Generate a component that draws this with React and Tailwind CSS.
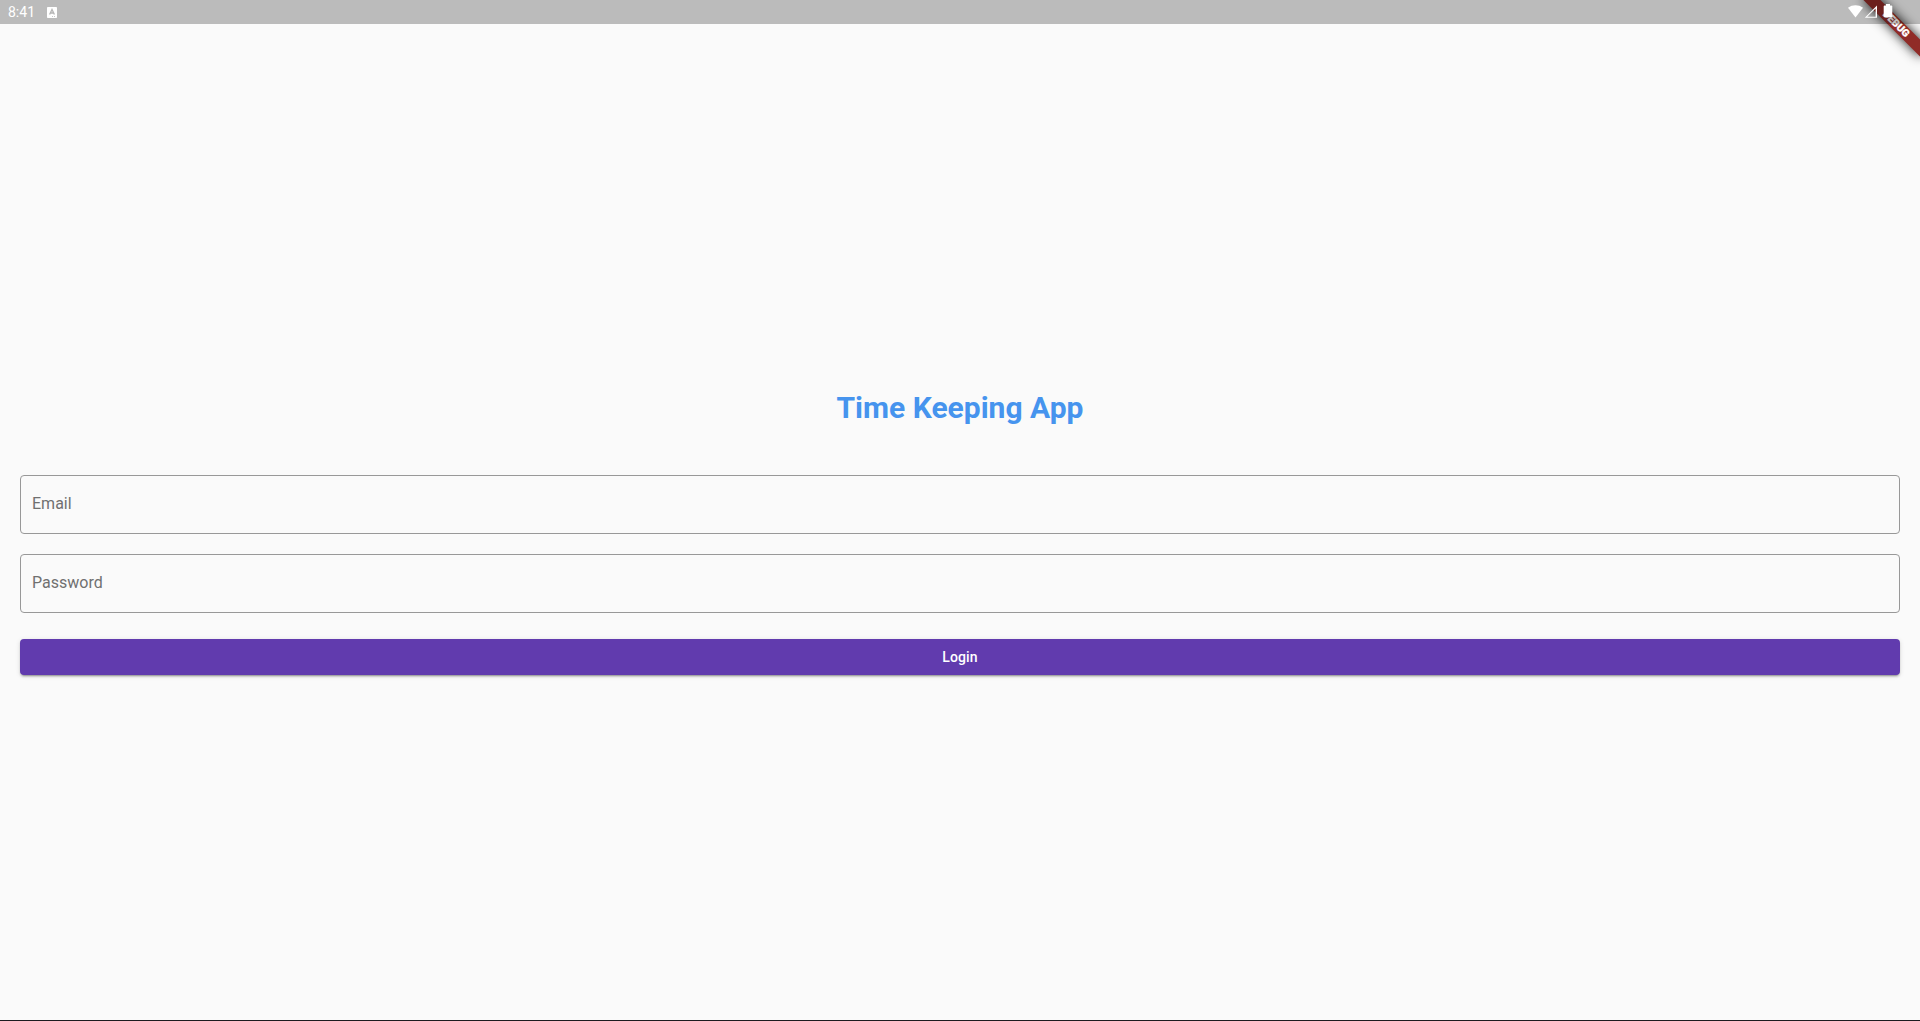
function DebugBanner() {
  return (
    <div className="pointer-events-none absolute top-0 right-0 h-20 w-20 overflow-hidden">
      <div className="absolute top-[28px] left-[40px] h-3 w-20 origin-[40px_-28px] rotate-45 bg-[#902b27] text-center text-[10.2px] leading-[12px] font-black text-white shadow-[0_0_12px_rgba(0,0,0,0.9)] [-webkit-text-stroke:0.3px_white]">
        DEBUG
      </div>
    </div>
  );
}

function StatusBar() {
  return (
    <header className="relative z-10 flex h-6 shrink-0 items-center bg-black/25 pr-[26px] pl-2 text-white">
      <span className="text-[14px] leading-6">8:41</span>
      <svg className="ml-3 h-[11px] w-[10px]" viewBox="0 0 10 11">
        <rect width="10" height="11" rx="0.8" fill="#fff" />
        <path d="M2.6 7.5 5 2.5l2.4 5M3.5 6h3" fill="none" stroke="#b5b5b5" strokeWidth="1.3" />
        <path d="M5 9.5h1M7 9.5h1" stroke="#bbb" strokeWidth="0.8" />
      </svg>
      <div className="ml-auto flex h-6">
        <svg className="h-6 w-[46px]" viewBox="0 0 46 24">
          <path d="M0 7.7C4.5 4.4 10.5 4.4 15 7.7L7.5 17.6Z" fill="#fff" />
          <path d="M16.8 17.8 29 5.5V17.8ZM19.2 16.8H27.6V8.4Z" fill="#fff" fillRule="evenodd" />
          <path d="M38 4h4v1.5h1.5q.8 0 .8.8v9.9q0 .8-.8.8h-7q-.8 0-.8-.8V6.3q0-.8.8-.8H38Z" fill="#fff" />
        </svg>
      </div>
    </header>
  );
}

function Field({ label, type }) {
  return (
    <input
      type={type}
      placeholder={label}
      aria-label={label}
      className="block h-[59px] w-full rounded-[4px] border border-[#989898] bg-transparent px-[11px] pb-[2px] text-[16px] text-[#666] outline-none placeholder:text-[#707070]"
    />
  );
}

export default function App() {
  return (
    <div className="relative isolate flex h-[1021px] w-full flex-col overflow-hidden border-b border-[#1b1b1f] bg-[#fafafa] font-['Roboto',sans-serif]">
      <DebugBanner />
      <StatusBar />
      <main className="flex flex-col px-5 pt-[366px]">
        <h1 className="text-center text-[30px] leading-[35px] font-bold text-[#4694ee]">Time Keeping App</h1>
        <form className="mt-[50px] flex flex-col">
          <Field label="Email" type="email" />
          <div className="mt-5">
            <Field label="Password" type="password" />
          </div>
          <button
            type="button"
            className="mt-[26px] h-9 rounded-[4px] bg-[#613bae] text-[14px] font-medium tracking-[0.1px] text-white shadow-[0_3px_1px_-2px_rgba(0,0,0,0.2),0_2px_2px_0_rgba(0,0,0,0.14),0_1px_5px_0_rgba(0,0,0,0.12)]"
          >
            Login
          </button>
        </form>
      </main>
    </div>
  );
}
